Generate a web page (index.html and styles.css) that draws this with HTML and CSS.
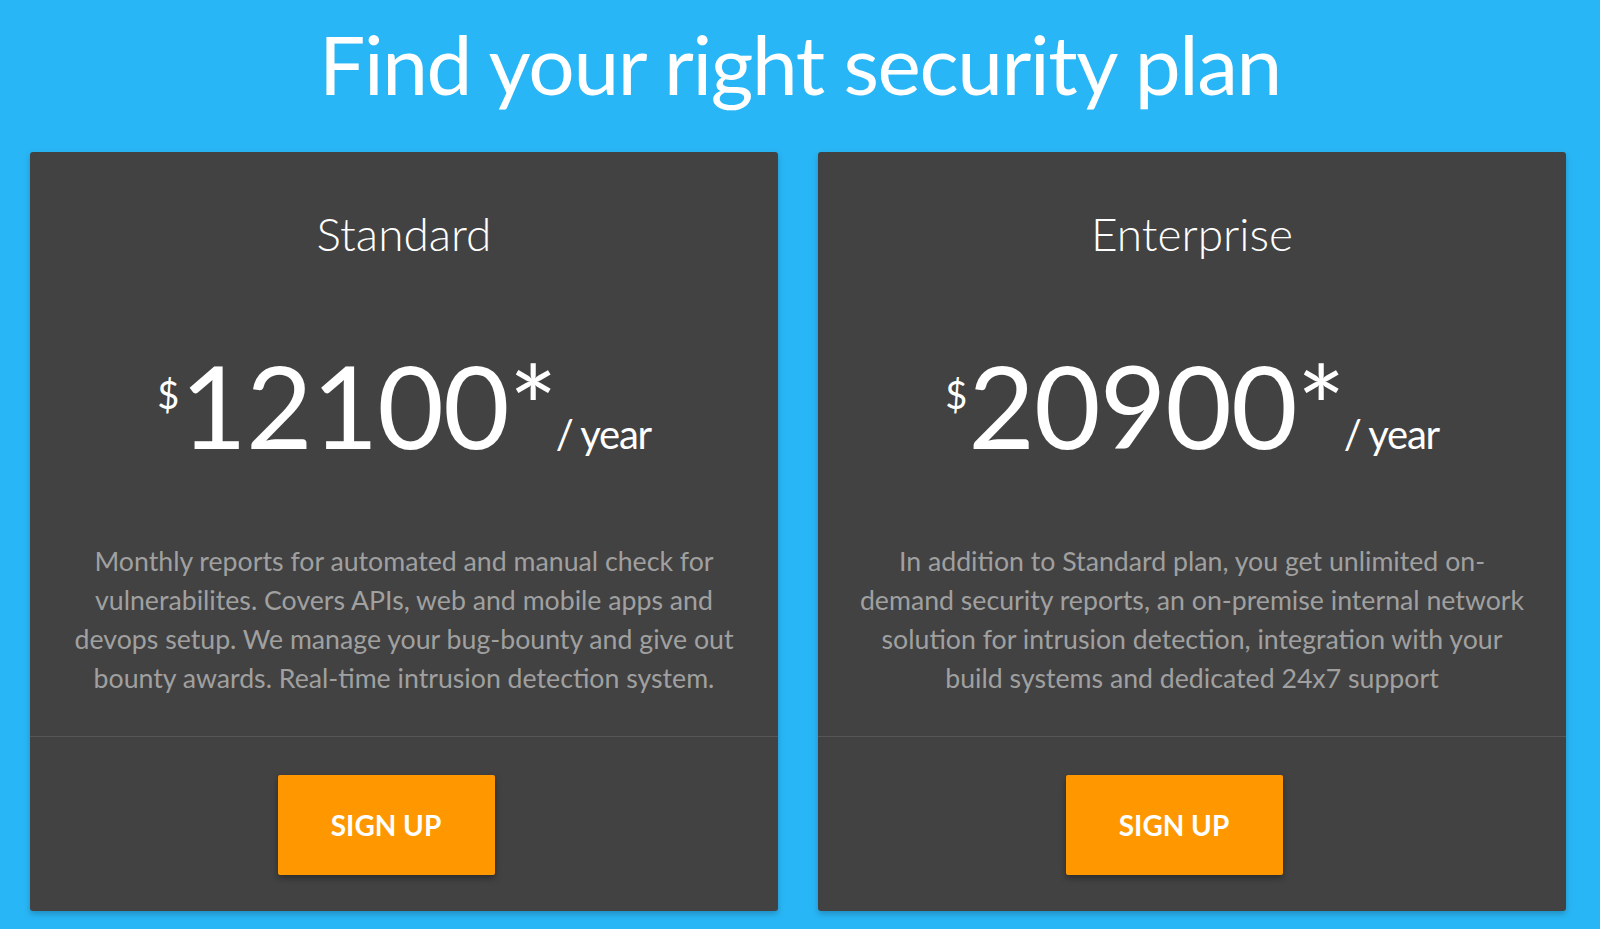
FILE: index.html
```html
<!DOCTYPE html>
<html>
<head>
<meta charset="utf-8">
<link rel="stylesheet" href="styles.css">
</head>
<body>
<main class="page">
  <h1 class="heading">Find your right security plan</h1>
  <div class="plans">
    <section class="plan">
      <div class="plan-body">
        <h2 class="plan-name">Standard</h2>
        <div class="price"><span class="currency">$</span><span class="amount">12100*</span><span class="period">/ year</span></div>
        <p class="desc">Monthly reports for automated and manual check for vulnerabilites. Covers APIs, web and mobile apps and devops setup. We manage your bug-bounty and give out bounty awards. Real-time intrusion detection system.</p>
      </div>
      <div class="plan-foot">
        <button class="signup">SIGN UP</button>
      </div>
    </section>
    <section class="plan">
      <div class="plan-body">
        <h2 class="plan-name">Enterprise</h2>
        <div class="price"><span class="currency">$</span><span class="amount">20900*</span><span class="period">/ year</span></div>
        <p class="desc">In addition to Standard plan, you get unlimited on-demand security reports, an on-premise internal network solution for intrusion detection, integration with your build systems and dedicated 24x7 support</p>
      </div>
      <div class="plan-foot">
        <button class="signup">SIGN UP</button>
      </div>
    </section>
  </div>
</main>
</body>
</html>
```

FILE: styles.css
```css
html, body {
  margin: 0;
  padding: 0;
  background: #29b6f6;
  font-family: Lato, "Noto Sans", sans-serif;
}

.page {
  padding: 15px 30px 19px 30px;
}

.heading {
  margin: 0;
  text-align: center;
  color: #fff;
  font-weight: 400;
  font-size: 82px;
  line-height: 96px;
  letter-spacing: -1.4px;
}

.plans {
  margin-top: 41px;
  display: grid;
  grid-template-columns: 748px 748px;
  column-gap: 40px;
}

.plan {
  background: #424242;
  border-radius: 3px;
  box-shadow: 0 3px 6px rgba(0, 0, 0, 0.22);
  display: flex;
  flex-direction: column;
  color: #fff;
}

.plan-body {
  padding: 54px 36px 38px;
  text-align: center;
}

.plan-name {
  margin: 0;
  font-weight: 300;
  font-size: 46px;
  line-height: 55px;
}

.price {
  margin-top: 86px;
  display: flex;
  justify-content: center;
  align-items: baseline;
  line-height: 115px;
}

.currency {
  align-self: flex-start;
  font-size: 38px;
  line-height: 36px;
  margin-top: 29px;
  margin-right: 1px;
}

.amount {
  font-size: 115px;
  letter-spacing: -1px;
}

.period {
  font-size: 40px;
  letter-spacing: -1.3px;
  margin-left: -1px;
}

.desc {
  margin: 50px 0 0;
  color: #a0a0a0;
  font-size: 26.7px;
  line-height: 39px;
}

.plan-foot {
  border-top: 1px solid #565656;
  padding: 38px 36px 36px 0;
  display: flex;
  justify-content: center;
}

.signup {
  width: 217px;
  height: 100px;
  border: none;
  border-radius: 2px;
  background: #ff9800;
  color: #fff;
  font-family: Lato, "Noto Sans", sans-serif;
  font-weight: 700;
  font-size: 28px;
  box-shadow: 0 3px 6px rgba(0, 0, 0, 0.35);
}
```
